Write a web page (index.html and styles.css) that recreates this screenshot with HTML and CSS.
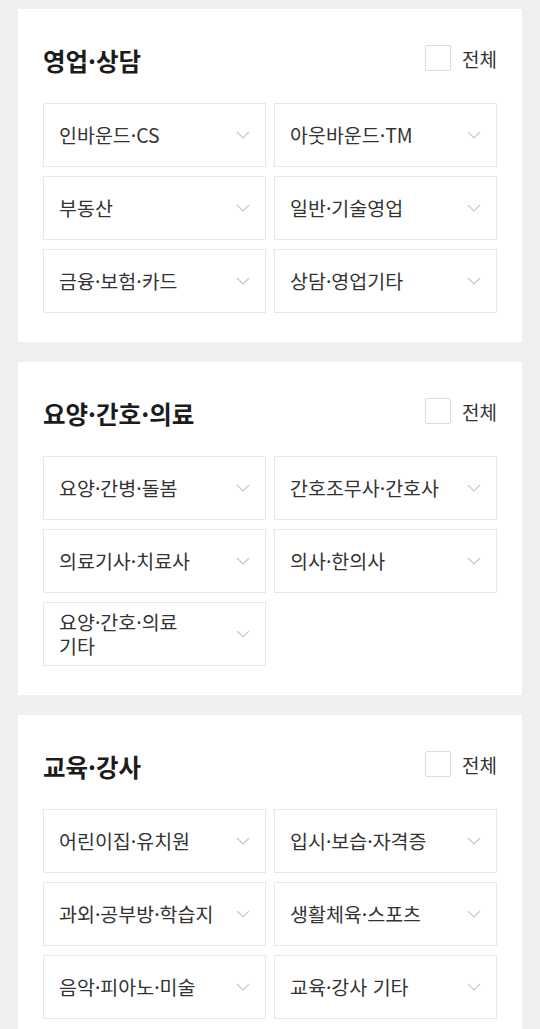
FILE: index.html
```html
<!DOCTYPE html>
<html lang="ko">
<head>
<meta charset="utf-8">
<link rel="stylesheet" href="styles.css">
</head>
<body>
<div class="page">
  <section class="card">
    <div class="head">
      <h2 class="title">영업·상담</h2>
      <label class="all"><span class="box"></span><span class="all-text">전체</span></label>
    </div>
    <div class="grid">
      <div class="item"><span class="label">인바운드·CS</span><svg class="chev" viewBox="0 0 14 8"><polyline points="1,1 7,7 13,1"/></svg></div>
      <div class="item"><span class="label">아웃바운드·TM</span><svg class="chev" viewBox="0 0 14 8"><polyline points="1,1 7,7 13,1"/></svg></div>
      <div class="item"><span class="label">부동산</span><svg class="chev" viewBox="0 0 14 8"><polyline points="1,1 7,7 13,1"/></svg></div>
      <div class="item"><span class="label">일반·기술영업</span><svg class="chev" viewBox="0 0 14 8"><polyline points="1,1 7,7 13,1"/></svg></div>
      <div class="item"><span class="label">금융·보험·카드</span><svg class="chev" viewBox="0 0 14 8"><polyline points="1,1 7,7 13,1"/></svg></div>
      <div class="item"><span class="label">상담·영업기타</span><svg class="chev" viewBox="0 0 14 8"><polyline points="1,1 7,7 13,1"/></svg></div>
    </div>
  </section>
  <section class="card">
    <div class="head">
      <h2 class="title">요양·간호·의료</h2>
      <label class="all"><span class="box"></span><span class="all-text">전체</span></label>
    </div>
    <div class="grid">
      <div class="item"><span class="label">요양·간병·돌봄</span><svg class="chev" viewBox="0 0 14 8"><polyline points="1,1 7,7 13,1"/></svg></div>
      <div class="item"><span class="label">간호조무사·간호사</span><svg class="chev" viewBox="0 0 14 8"><polyline points="1,1 7,7 13,1"/></svg></div>
      <div class="item"><span class="label">의료기사·치료사</span><svg class="chev" viewBox="0 0 14 8"><polyline points="1,1 7,7 13,1"/></svg></div>
      <div class="item"><span class="label">의사·한의사</span><svg class="chev" viewBox="0 0 14 8"><polyline points="1,1 7,7 13,1"/></svg></div>
      <div class="item"><span class="label wrap">요양·간호·의료 기타</span><svg class="chev" viewBox="0 0 14 8"><polyline points="1,1 7,7 13,1"/></svg></div>
    </div>
  </section>
  <section class="card">
    <div class="head">
      <h2 class="title">교육·강사</h2>
      <label class="all"><span class="box"></span><span class="all-text">전체</span></label>
    </div>
    <div class="grid">
      <div class="item"><span class="label">어린이집·유치원</span><svg class="chev" viewBox="0 0 14 8"><polyline points="1,1 7,7 13,1"/></svg></div>
      <div class="item"><span class="label">입시·보습·자격증</span><svg class="chev" viewBox="0 0 14 8"><polyline points="1,1 7,7 13,1"/></svg></div>
      <div class="item"><span class="label">과외·공부방·학습지</span><svg class="chev" viewBox="0 0 14 8"><polyline points="1,1 7,7 13,1"/></svg></div>
      <div class="item"><span class="label">생활체육·스포츠</span><svg class="chev" viewBox="0 0 14 8"><polyline points="1,1 7,7 13,1"/></svg></div>
      <div class="item"><span class="label">음악·피아노·미술</span><svg class="chev" viewBox="0 0 14 8"><polyline points="1,1 7,7 13,1"/></svg></div>
      <div class="item"><span class="label">교육·강사 기타</span><svg class="chev" viewBox="0 0 14 8"><polyline points="1,1 7,7 13,1"/></svg></div>
    </div>
  </section>
</div>
</body>
</html>
```
FILE: styles.css
```css
html, body {
  margin: 0;
  padding: 0;
  background: #efefef;
}
body {
  font-family: "Noto Sans CJK KR", "Noto Sans", sans-serif;
  color: #333;
}
.page {
  padding: 9px 18px 0;
  display: flex;
  flex-direction: column;
  gap: 20px;
}
.card {
  background: #fff;
  padding: 30px 25px 29px;
}
.head {
  display: flex;
  justify-content: space-between;
  align-items: center;
  height: 44px;
  margin-bottom: 20px;
}
.title {
  margin: 0;
  font-size: 24.5px;
  font-weight: 700;
  line-height: 44px;
  color: #1c1c1c;
}
.all {
  display: flex;
  align-items: center;
  gap: 11px;
  margin-top: -6px;
}
.box {
  width: 26px;
  height: 26px;
  border: 1px solid #dcdcdc;
  border-radius: 2px;
  box-sizing: border-box;
}
.all-text {
  font-size: 19px;
  color: #333;
}
.grid {
  display: grid;
  grid-template-columns: 1fr 1fr;
  column-gap: 8px;
  row-gap: 9px;
}
.item {
  height: 64px;
  box-sizing: border-box;
  border: 1px solid #e8e8e8;
  display: flex;
  align-items: center;
  justify-content: space-between;
  padding: 0 15px;
}
.label {
  font-size: 19.5px;
  line-height: 24px;
  color: #333;
  white-space: nowrap;
}
.label.wrap {
  white-space: normal;
  word-break: keep-all;
  max-width: 150px;
}
.chev {
  width: 14px;
  height: 8px;
  flex: none;
  fill: none;
  stroke: #c8c8c8;
  stroke-width: 1.2;
}
```
